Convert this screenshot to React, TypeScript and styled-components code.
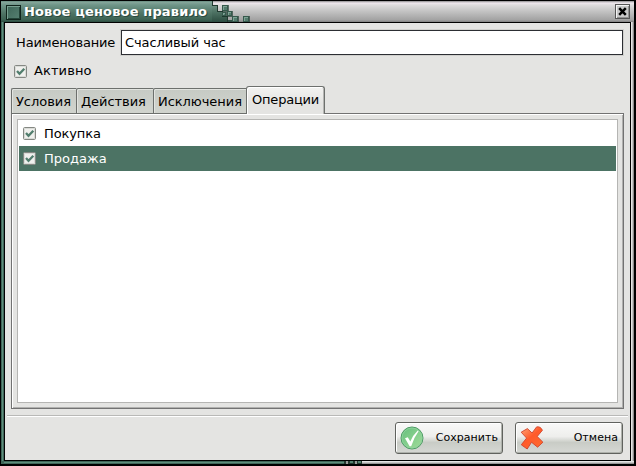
import React from 'react';
import styled, { createGlobalStyle, css } from 'styled-components';

const Global = createGlobalStyle`
  * { box-sizing: border-box; }
  body { margin: 0; background: #000; overflow: hidden; }
`;

const Frame = styled.div`
  width: 636px;
  height: 466px;
  background: #000;
  padding: 1px 2px 2px 1px;
  display: flex;
  flex-direction: column;
  font: 13px/16px 'DejaVu Sans', sans-serif;
  color: #000;
  white-space: nowrap;
`;

const TitleBar = styled.header`
  height: 21px;
  flex: none;
  display: flex;
  align-items: stretch;
  background: linear-gradient(#8b8b8b 0, #f0e8ee 2px, #dedcdd 4px, #c4c4c4 10px, #a2a2a2 19px, #808080 21px);
`;

const TitleGreen = styled.div`
  width: 211px;
  display: flex;
  align-items: center;
  background: linear-gradient(#5b8275 0, #86a69b 1px, #6f9588 4px, #507566 12px, #3c6152 19px, #2c4c40 21px);
`;

const WindowMenu = styled.span`
  width: 15px;
  height: 15px;
  margin: 1px 3px 0 5px;
  border: 1px solid #10241c;
  box-shadow: inset 1px 1px #78a090, inset -1px -1px #234438;
  background: linear-gradient(135deg, #3d6557, #568172);
`;

const Title = styled.span`
  color: #fff;
  font-weight: bold;
  font-size: 13px;
  letter-spacing: 0.15px;
  text-shadow: 1px 1px #29483d;
`;

const Mosaic = styled.svg`
  width: 42px;
  height: 21px;
  display: block;
`;

const CloseButton = styled.button`
  width: 15px;
  height: 15px;
  margin: 3px 4px 0 auto;
  padding: 0;
  border: 1px solid #555;
  box-shadow: inset 1px 1px #f4f4f4, inset -1px -1px #929292;
  background: #c9c9c9;
  display: flex;
  align-items: center;
  justify-content: center;
`;

const Sides = styled.div`
  flex: 1;
  display: flex;
  min-height: 0;
`;

const Edge = styled.div<{ $green?: boolean }>`
  width: 3px;
  background: ${p => p.$green
    ? 'linear-gradient(90deg, #3f6658 0 1px, #5f8d7c 1px 2px, #3f6658 2px)'
    : 'linear-gradient(90deg, #e6e6e6 0 1px, #c4c4c4 1px 2px, #8d8d8d 2px)'};
`;

const BottomEdge = styled.svg`
  height: 3px;
  width: 633px;
  flex: none;
  display: block;
`;

const Body = styled.main`
  flex: 1;
  border: 1px solid #000;
  background: #e4e4e2;
  display: flex;
  flex-direction: column;
`;

const NameRow = styled.label`
  display: flex;
  align-items: center;
  height: 27px;
  margin: 6px 6px 0 11px;
`;

const NameLabel = styled.span`
  width: 105px;
  font-size: 13px;
  letter-spacing: -0.15px;
`;

const NameInput = styled.input`
  flex: 1;
  min-width: 0;
  height: 25px;
  padding: 0 3px;
  margin-right: 1px;
  border: 1px solid #2c2e33;
  box-shadow: 0 0 0 1px #d0d0cd;
  background: #fff;
  font: inherit;
  letter-spacing: -0.1px;
  color: #000;
  outline: none;
`;

const ActiveRow = styled.label`
  display: flex;
  align-items: center;
  gap: 7px;
  height: 26px;
  margin: 2px 0 0 9px;
  letter-spacing: 0.1px;
`;

const CheckBox = styled.svg`
  width: 13px;
  height: 13px;
  flex: none;
  display: block;
`;

const TabStrip = styled.nav`
  display: flex;
  align-items: flex-end;
  height: 28px;
  margin: 2px 6px -1px;
  z-index: 1;
`;

const Tab = styled.button<{ $w: number; $active?: boolean }>`
  width: ${p => p.$w}px;
  height: 26px;
  padding: 1px 0 0 4px;
  border: 1px solid #6d706d;
  border-right-width: 0;
  border-radius: 2px 0 0 0;
  background: linear-gradient(#c6cac4, #d1d4ce);
  box-shadow: inset 1px 1px #e2e4e0;
  font: inherit;
  letter-spacing: -0.05px;
  color: #000;
  text-align: left;
  ${p => p.$active && css`
    height: 28px;
    padding: 0 0 1px 5px;
    letter-spacing: -0.2px;
    border-right-width: 1px;
    border-bottom: 0;
    border-radius: 3px 3px 0 0;
    background: linear-gradient(#f3f3f1, #e4e4e2 60%);
    box-shadow: inset 1px 1px #fff, inset -1px 0 #b5b5b3;
  `}
`;

const Panel = styled.section`
  height: 296px;
  margin: 0 6px;
  padding: 5px;
  border: 1px solid #727272;
  box-shadow: inset 1px 1px #fff, inset -1px -1px #b0b0ae;
`;

const List = styled.div`
  height: 284px;
  border: 1px solid #b5b5b3;
  padding: 1px;
  background: #fff;
`;

const Item = styled.div<{ $selected?: boolean }>`
  height: 25px;
  display: flex;
  align-items: center;
  gap: 8px;
  padding-left: 4px;
  letter-spacing: -0.1px;
  ${p => p.$selected && css`background: #4c7364; color: #fff; letter-spacing: 0;`}
`;

const Footer = styled.footer`
  margin: 6px 2px 0;
  border-top: 1px solid #b9b9b7;
  box-shadow: inset 0 1px #fff;
  display: flex;
  justify-content: flex-end;
  gap: 12px;
  padding: 6px 5px 0 0;
`;

const Button = styled.button`
  width: 108px;
  height: 32px;
  padding: 0 4px 0 4px;
  border: 1px solid #60625e;
  border-radius: 3px;
  background: linear-gradient(#f9f9f8 0, #eeeeec 45%, #c9ccc6 65%, #d6d8d4 100%);
  box-shadow: inset 1px 1px #fff, inset -1px -1px #aeb1ab;
  display: flex;
  align-items: center;
  justify-content: space-between;
  font: 11px/14px 'DejaVu Sans', sans-serif;
  letter-spacing: 0.05px;
  color: #000;
`;

const Icon = styled.svg`
  width: 24px;
  height: 24px;
  flex: none;
`;

const Check = () => (
  <CheckBox viewBox="0 0 13 13">
    <rect x=".5" y=".5" width="12" height="12" rx="1.2" fill="#f0f0ed" stroke="#858883" />
    <rect x="1.5" y="1.5" width="10" height="10" fill="none" stroke="#d9dbd7" />
    <path d="M3 6L5.5 8.8L10.3 3.7" fill="none" stroke="#527e6e" strokeWidth="2.3" />
  </CheckBox>
);

const Pixel = ({ x, y, size = 6 }: { x: number; y: number; size?: number }) => (
  <g transform={`translate(${x} ${y})`}>
    <rect width={size + 1} height={size + 1} fill="#1c372d" opacity=".65" />
    <rect width={size} height={size} fill="#36594c" />
    <rect x="1" y="1" width={size - 2} height={size - 2} fill="#7fa295" />
    <rect x="2" y="2" width={size - 3} height={size - 3} fill="#547c6d" />
  </g>
);

export default function App() {
  return (
    <>
      <Global />
      <Frame>
        <TitleBar>
          <TitleGreen>
            <WindowMenu />
            <Title>Новое ценовое правило</Title>
          </TitleGreen>
          <Mosaic viewBox="0 0 42 21" shapeRendering="crispEdges">
            <defs>
              <linearGradient id="edge" gradientUnits="userSpaceOnUse" x1="0" y1="0" x2="0" y2="21">
                <stop offset="0" stopColor="#86a69b" />
                <stop offset=".5" stopColor="#507566" />
                <stop offset="1" stopColor="#2c4c40" />
              </linearGradient>
            </defs>
            <path d="M0 0H1V4H6V10H11V15H16V19H21V21H0Z" fill="url(#edge)" />
            <path d="M.5 0V4.5H5.5V10.5H10.5V15.5H15.5V21" fill="none" stroke="#20392f" strokeWidth="1" />
            <Pixel x={10} y={4} />
            <Pixel x={10} y={11} size={4} />
            <Pixel x={15} y={10} size={5} />
            <Pixel x={20} y={15} />
            <Pixel x={31} y={15} />
          </Mosaic>
          <CloseButton aria-label="Закрыть">
            <svg width="9" height="9" viewBox="0 0 9 9">
              <path d="M1.2 1.2L7.8 7.8M7.8 1.2L1.2 7.8" stroke="#000" strokeWidth="2.5" />
            </svg>
          </CloseButton>
        </TitleBar>
        <Sides>
          <Edge $green />
          <Body>
            <NameRow>
              <NameLabel>Наименование</NameLabel>
              <NameInput defaultValue="Счасливый час" />
            </NameRow>
            <ActiveRow><Check />Активно</ActiveRow>
            <TabStrip>
              <Tab $w={65}>Условия</Tab>
              <Tab $w={77}>Действия</Tab>
              <Tab $w={93}>Исключения</Tab>
              <Tab $w={79} $active>Операции</Tab>
            </TabStrip>
            <Panel>
              <List>
                <Item><Check />Покупка</Item>
                <Item $selected><Check />Продажа</Item>
              </List>
            </Panel>
            <Footer>
              <Button>
                <Icon viewBox="0 0 24 24">
                  <defs>
                    <linearGradient id="ok" x1="0" y1="0" x2="1" y2="1">
                      <stop offset="0" stopColor="#65bf7c" />
                      <stop offset="1" stopColor="#a3dd9b" />
                    </linearGradient>
                  </defs>
                  <circle cx="12" cy="12" r="11" fill="url(#ok)" stroke="#4f9a66" />
                  <circle cx="12" cy="12" r="10" fill="none" stroke="#91d3a0" strokeWidth=".8" />
                  <path d="M5 12.2L7.8 11.2L10.3 15.5Q13 9 17.8 4.5L18.6 5.2Q13.5 12 11.2 20.3H9.6Z" fill="#fff" />
                </Icon>
                Сохранить
              </Button>
              <Button>
                <Icon viewBox="0 0 24 24">
                  <defs>
                    <linearGradient id="no" x1="0" y1="0" x2=".8" y2="1">
                      <stop offset="0" stopColor="#ffab7d" />
                      <stop offset=".5" stopColor="#ff5a2a" />
                      <stop offset="1" stopColor="#ff6a2e" />
                    </linearGradient>
                  </defs>
                  <path d="M1.2 6.2L7.4 2.6L12.1 7L16.6 .9Q20.7 .2 22.4 4.3L17.2 10.5L22.9 16.2L17.6 21.2L11.5 16.2L7.2 23L1.3 18.8L6.6 12.1Z" fill="url(#no)" stroke="#d0422b" strokeWidth=".9" strokeLinejoin="round" />
                </Icon>
                Отмена
              </Button>
            </Footer>
          </Body>
          <Edge />
        </Sides>
        <BottomEdge viewBox="0 0 633 3" shapeRendering="crispEdges">
          <path d="M0 0H633V3H0Z" fill="#c4c4c4" />
          <path d="M343 0H633V1H343Z" fill="#e4e4e4" />
          <path d="M361 2H633V3H361Z" fill="#969696" />
          <path d="M0 0H343V3H0Z" fill="#3f6658" />
          <path d="M3 1H343V2H3Z" fill="#5f8d7c" />
          <path d="M343 0H361V3H343Z" fill="#24382f" />
          <path d="M345 0H347V3H345ZM354 0H356V3H354Z" fill="#999" />
          <path d="M349 0H352V2H349ZM357 0H360V2H357Z" fill="#568271" />
        </BottomEdge>
      </Frame>
    </>
  );
}
